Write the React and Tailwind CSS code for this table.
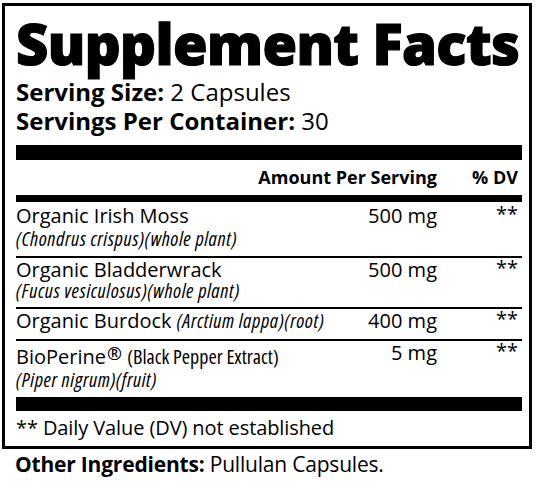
export default function App() {
  const cond = "font-stretch-condensed";
  const it = `italic text-[20px] ${cond} tracking-[0.6px]`;
  return (
    <div className="w-[536px] h-[482px] bg-white text-black font-['Open_Sans',sans-serif] pt-[3px] pl-[2px] overflow-hidden">
      <div className="w-[530px] h-[446px] border-[3px] border-black pl-[11px] pr-[7px] flex flex-col">
        <div className="mt-[7px] text-[56px] leading-[60px] font-extrabold tracking-[-0.6px] whitespace-nowrap [-webkit-text-stroke:1.2px_black]">
          Supplement Facts
        </div>
        <div className="mt-[4px] text-[24px] leading-[29px] whitespace-nowrap">
          <div>
            <span className="font-bold">Serving Size:</span> 2 Capsules
          </div>
          <div>
            <span className="font-bold">Servings Per Container:</span> 30
          </div>
        </div>
        <div className="mt-[10px] h-[15px] bg-black" />
        <div className="h-[35px] flex text-[18px] leading-[35px] font-bold">
          <div className="flex-1" />
          <div className="w-[200px] text-right">Amount Per Serving</div>
          <div className="w-[85px] text-right pr-[4px]">% DV</div>
        </div>
        <div className="h-[7px] bg-black" />

        <div className="pt-[2px] pb-[6px] border-b-2 border-black flex text-[20px] leading-[24px]">
          <div className="flex-1">
            <div>Organic Irish Moss</div>
            <div className={`${it} leading-[22px]`}>(Chondrus crispus)(whole plant)</div>
          </div>
          <div className="text-right">500 mg</div>
          <div className="w-[85px] text-right pr-[4px] leading-[20px]">**</div>
        </div>

        <div className="pb-[7px] border-b-2 border-black flex text-[20px] leading-[24px]">
          <div className="flex-1">
            <div>Organic Bladderwrack</div>
            <div className={`${it} leading-[18px]`}>(Fucus vesiculosus)(whole plant)</div>
          </div>
          <div className="text-right">500 mg</div>
          <div className="w-[85px] text-right pr-[4px] leading-[20px]">**</div>
        </div>

        <div className="pb-[6px] border-b-2 border-black flex text-[20px] leading-[24px]">
          <div className="flex-1 whitespace-nowrap">
            Organic Burdock <span className={it}>(Arctium lappa)(root)</span>
          </div>
          <div className="text-right">400 mg</div>
          <div className="w-[85px] text-right pr-[4px] leading-[20px]">**</div>
        </div>

        <div className="pb-[6px] flex text-[20px] leading-[24px]">
          <div className="flex-1">
            <div className="whitespace-nowrap">
              BioPerine<span className="text-[18px] font-semibold align-[4px] ml-[1px]">®</span>{" "}
              <span className={`text-[20px] ${cond}`}>(Black Pepper Extract)</span>
            </div>
            <div className={`${it} leading-[22px]`}>(Piper nigrum)(fruit)</div>
          </div>
          <div className="text-right">5 mg</div>
          <div className="w-[85px] text-right pr-[4px] leading-[20px]">**</div>
        </div>

        <div className="h-[14px] bg-black" />
        <div className="text-[20px] leading-[34px] tracking-[-0.1px] whitespace-nowrap">** Daily Value (DV) not established</div>
      </div>
      <div className="pl-[13px] text-[21px] leading-[30px] tracking-[-0.2px] whitespace-nowrap">
        <span className="font-bold">Other Ingredients:</span> Pullulan Capsules.
      </div>
    </div>
  );
}
